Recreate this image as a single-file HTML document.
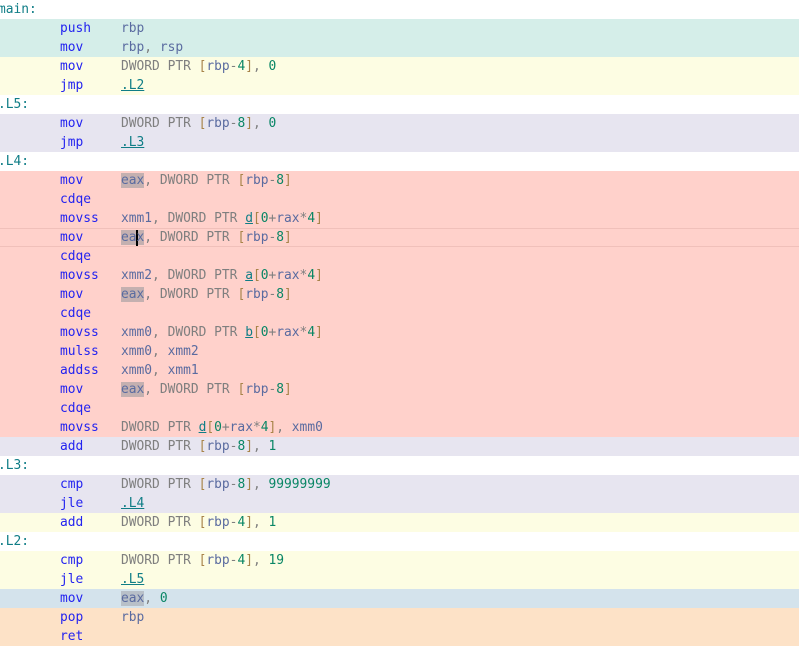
<!DOCTYPE html>
<html><head><meta charset="utf-8"><style>
body{margin:0;width:803px;height:646px;overflow:hidden;background:#fff;font-family:"DejaVu Sans Mono","Liberation Mono",monospace;font-size:12.9px}
.r{position:relative;height:19px;line-height:19px;width:799px;white-space:pre}
.l{position:absolute;left:-2px;color:#0f7d86}
.m{position:absolute;left:60px;color:#2323f0}
.o{position:absolute;left:121px;color:#7f7f7f}
.g{color:#5a6ba0}
.n{color:#098665}
.b{color:#a8844a}
.k{color:#0f7d86;text-decoration:underline}
.h{background:#c4b0b0}
.t{background:#d5eee9}.y{background:#fdfde3}.v{background:#e7e5f0}.p{background:#ffd1cb}.u{background:#d4e3ec}.c{background:#fde2c7}
.cur{border-top:1px solid #f0c0ba;border-bottom:1px solid #f0c0ba;height:17px;line-height:17px}
.caret{display:inline-block;width:2px;height:16px;background:#000;vertical-align:middle;margin:0 -1px}
</style></head><body>
<div class="r"><span class="l">main:</span></div>
<div class="r t"><span class="m">push</span><span class="o"><span class="g">rbp</span></span></div>
<div class="r t"><span class="m">mov</span><span class="o"><span class="g">rbp</span>, <span class="g">rsp</span></span></div>
<div class="r y"><span class="m">mov</span><span class="o">DWORD PTR <span class="b">[</span><span class="g">rbp</span>-<span class="n">4</span><span class="b">]</span>, <span class="n">0</span></span></div>
<div class="r y"><span class="m">jmp</span><span class="o"><span class="k">.L2</span></span></div>
<div class="r"><span class="l">.L5:</span></div>
<div class="r v"><span class="m">mov</span><span class="o">DWORD PTR <span class="b">[</span><span class="g">rbp</span>-<span class="n">8</span><span class="b">]</span>, <span class="n">0</span></span></div>
<div class="r v"><span class="m">jmp</span><span class="o"><span class="k">.L3</span></span></div>
<div class="r"><span class="l">.L4:</span></div>
<div class="r p"><span class="m">mov</span><span class="o"><span class="g h">eax</span>, DWORD PTR <span class="b">[</span><span class="g">rbp</span>-<span class="n">8</span><span class="b">]</span></span></div>
<div class="r p"><span class="m">cdqe</span></div>
<div class="r p"><span class="m">movss</span><span class="o"><span class="g">xmm1</span>, DWORD PTR <span class="k">d</span><span class="b">[</span><span class="n">0</span>+<span class="g">rax</span>*<span class="n">4</span><span class="b">]</span></span></div>
<div class="r p cur"><span class="m">mov</span><span class="o"><span class="g h">ea<span class="caret"></span>x</span>, DWORD PTR <span class="b">[</span><span class="g">rbp</span>-<span class="n">8</span><span class="b">]</span></span></div>
<div class="r p"><span class="m">cdqe</span></div>
<div class="r p"><span class="m">movss</span><span class="o"><span class="g">xmm2</span>, DWORD PTR <span class="k">a</span><span class="b">[</span><span class="n">0</span>+<span class="g">rax</span>*<span class="n">4</span><span class="b">]</span></span></div>
<div class="r p"><span class="m">mov</span><span class="o"><span class="g h">eax</span>, DWORD PTR <span class="b">[</span><span class="g">rbp</span>-<span class="n">8</span><span class="b">]</span></span></div>
<div class="r p"><span class="m">cdqe</span></div>
<div class="r p"><span class="m">movss</span><span class="o"><span class="g">xmm0</span>, DWORD PTR <span class="k">b</span><span class="b">[</span><span class="n">0</span>+<span class="g">rax</span>*<span class="n">4</span><span class="b">]</span></span></div>
<div class="r p"><span class="m">mulss</span><span class="o"><span class="g">xmm0</span>, <span class="g">xmm2</span></span></div>
<div class="r p"><span class="m">addss</span><span class="o"><span class="g">xmm0</span>, <span class="g">xmm1</span></span></div>
<div class="r p"><span class="m">mov</span><span class="o"><span class="g h">eax</span>, DWORD PTR <span class="b">[</span><span class="g">rbp</span>-<span class="n">8</span><span class="b">]</span></span></div>
<div class="r p"><span class="m">cdqe</span></div>
<div class="r p"><span class="m">movss</span><span class="o">DWORD PTR <span class="k">d</span><span class="b">[</span><span class="n">0</span>+<span class="g">rax</span>*<span class="n">4</span><span class="b">]</span>, <span class="g">xmm0</span></span></div>
<div class="r v"><span class="m">add</span><span class="o">DWORD PTR <span class="b">[</span><span class="g">rbp</span>-<span class="n">8</span><span class="b">]</span>, <span class="n">1</span></span></div>
<div class="r"><span class="l">.L3:</span></div>
<div class="r v"><span class="m">cmp</span><span class="o">DWORD PTR <span class="b">[</span><span class="g">rbp</span>-<span class="n">8</span><span class="b">]</span>, <span class="n">99999999</span></span></div>
<div class="r v"><span class="m">jle</span><span class="o"><span class="k">.L4</span></span></div>
<div class="r y"><span class="m">add</span><span class="o">DWORD PTR <span class="b">[</span><span class="g">rbp</span>-<span class="n">4</span><span class="b">]</span>, <span class="n">1</span></span></div>
<div class="r"><span class="l">.L2:</span></div>
<div class="r y"><span class="m">cmp</span><span class="o">DWORD PTR <span class="b">[</span><span class="g">rbp</span>-<span class="n">4</span><span class="b">]</span>, <span class="n">19</span></span></div>
<div class="r y"><span class="m">jle</span><span class="o"><span class="k">.L5</span></span></div>
<div class="r u"><span class="m">mov</span><span class="o"><span class="g h" style="background:#b8c0c8">eax</span>, <span class="n">0</span></span></div>
<div class="r c"><span class="m">pop</span><span class="o"><span class="g">rbp</span></span></div>
<div class="r c"><span class="m">ret</span></div>
</body></html>
